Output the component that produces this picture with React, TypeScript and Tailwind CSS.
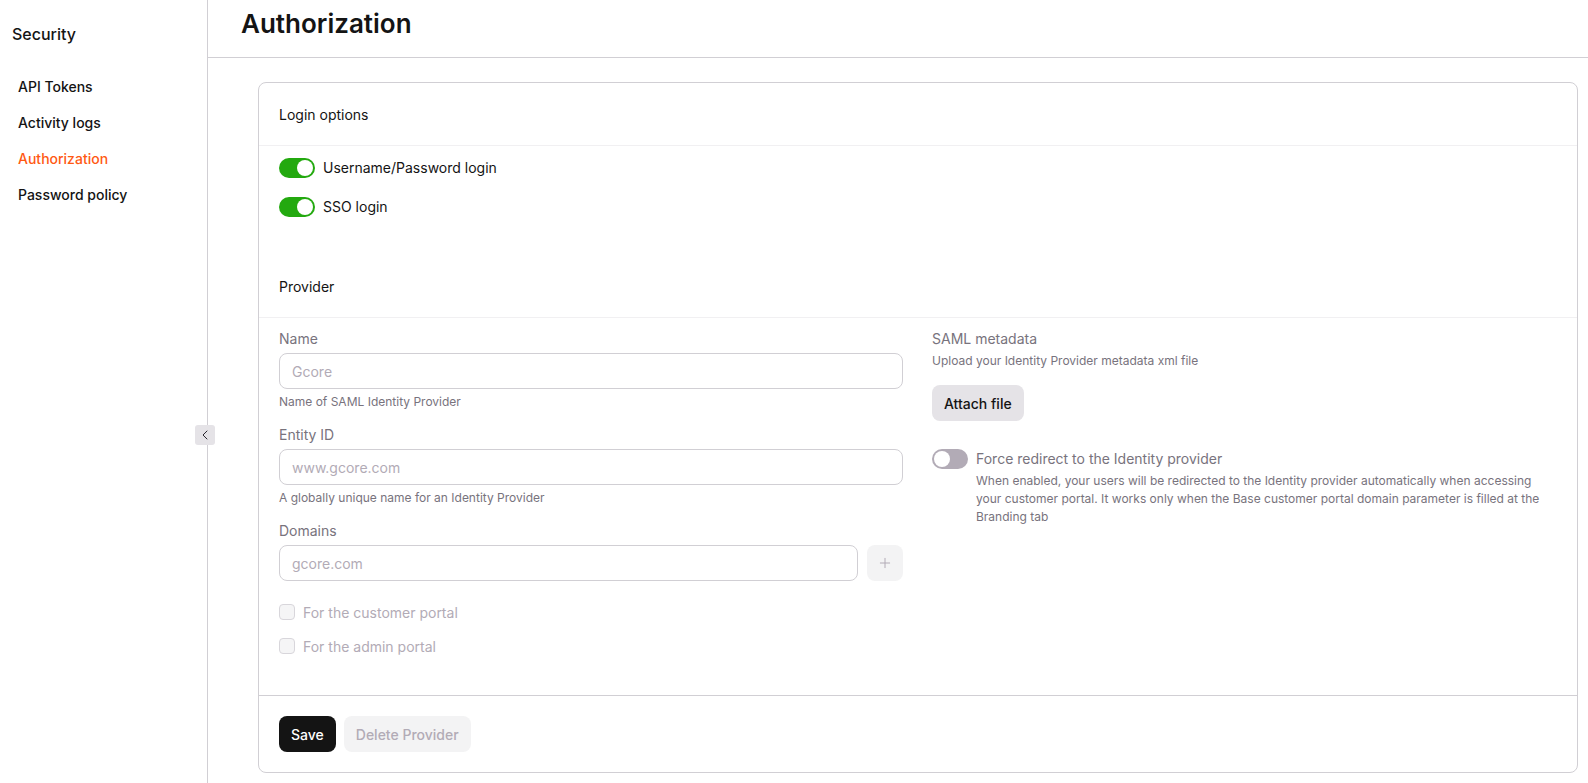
import { ChevronLeft, Plus } from 'lucide-react';

const navItems = ['API Tokens', 'Activity logs', 'Authorization', 'Password policy'];

function Toggle({ on = false }: { on?: boolean }) {
    return (
        <span className={`flex h-5 w-9 shrink-0 items-center rounded-full px-[2px] ${on ? 'justify-end bg-[#23a90f]' : 'justify-start bg-[#b2abb6]'}`}>
            <span className="h-4 w-4 rounded-full bg-white" />
        </span>
    );
}

function Field({ label, placeholder, hint }: { label: string; placeholder: string; hint?: string }) {
    return (
        <div className="flex flex-col">
            <label className="text-[14px] leading-[20px] text-[#78737d]">{label}</label>
            <input
                disabled
                placeholder={placeholder}
                className="mt-[4px] h-9 w-full rounded-[8px] border border-[#d1cfd4] bg-white px-3 text-[14px] placeholder:text-[#b2abb6]"
            />
            {hint && <p className="mt-[4px] text-[12px] leading-[18px] text-[#78737d]">{hint}</p>}
        </div>
    );
}

function Check({ label }: { label: string }) {
    return (
        <div className="flex h-4 items-center gap-2">
            <span className="h-4 w-4 rounded-[4px] border border-[#d8d6db] bg-[#f5f5f6]" />
            <span className="text-[14px] text-[#b2abb6]">{label}</span>
        </div>
    );
}

export default function App() {
    return (
        <div className="relative flex h-[783px] w-full overflow-hidden bg-white font-['Inter',sans-serif] text-[#141414]">
            <aside className="w-[208px] shrink-0 border-r border-[#d1cfd4]">
                <h2 className="mt-[23px] pl-3 text-[16px] leading-[22px] font-medium">Security</h2>
                <nav className="mt-[23px] flex flex-col pl-[18px]">
                    {navItems.map((item) => (
                        <a
                            key={item}
                            className={`flex h-9 items-center text-[14px] font-medium ${item === 'Authorization' ? 'text-[#ff5913]' : ''}`}
                        >
                            {item}
                        </a>
                    ))}
                </nav>
            </aside>
            <button className="absolute top-[425px] left-[195px] flex h-5 w-5 items-center justify-center rounded-[3px] bg-[#e5e3e7]">
                <ChevronLeft className="h-4 w-4 text-[#2b2830]" strokeWidth={1.5} />
            </button>

            <main className="flex min-w-0 flex-1 flex-col">
                <header className="flex h-[58px] shrink-0 items-start border-b border-[#d1cfd4] pl-[33px]">
                    <h1 className="mt-[6px] text-[26px] leading-[36px] font-semibold">Authorization</h1>
                </header>
                <div className="pt-[24px] pr-[10px] pl-[50px]">
                    <section className="flex h-[691px] flex-col rounded-[8px] border border-[#d1cfd4]">
                        <h3 className="flex h-[63px] shrink-0 items-center border-b border-[#f1f0f2] pl-5 text-[14px]">Login options</h3>
                        <div className="mt-[11px] flex flex-col gap-[18px] pl-5">
                            <div className="flex items-center gap-2 text-[14px]">
                                <Toggle on />
                                Username/Password login
                            </div>
                            <div className="flex items-center gap-2 text-[14px]">
                                <Toggle on />
                                SSO login
                            </div>
                        </div>
                        <h3 className="mt-[38px] flex h-[63px] shrink-0 items-center border-b border-[#f1f0f2] pl-5 text-[14px]">Provider</h3>

                        <div className="flex flex-1 gap-[29px] px-5 pt-[11px]">
                            <div className="flex w-[624px] shrink-0 flex-col gap-[14px]">
                                <Field label="Name" placeholder="Gcore" hint="Name of SAML Identity Provider" />
                                <Field label="Entity ID" placeholder="www.gcore.com" hint="A globally unique name for an Identity Provider" />
                                <div className="flex flex-col">
                                    <label className="text-[14px] leading-[20px] text-[#78737d]">Domains</label>
                                    <div className="mt-[4px] flex gap-[9px]">
                                        <input
                                            disabled
                                            placeholder="gcore.com"
                                            className="h-9 min-w-0 flex-1 rounded-[8px] border border-[#d1cfd4] bg-white px-3 text-[14px] placeholder:text-[#b2abb6]"
                                        />
                                        <button className="flex h-9 w-9 shrink-0 items-center justify-center rounded-[8px] bg-[#f3f3f4]">
                                            <Plus className="h-4 w-4 text-[#b2abb6]" strokeWidth={1.5} />
                                        </button>
                                    </div>
                                </div>
                                <div className="mt-[9px] flex flex-col gap-[18px]">
                                    <Check label="For the customer portal" />
                                    <Check label="For the admin portal" />
                                </div>
                            </div>
                            <div className="min-w-0 flex-1">
                                <div className="text-[14px] leading-[20px] text-[#78737d]">SAML metadata</div>
                                <p className="mt-[3px] text-[12px] leading-[18px] text-[#78737d]">Upload your Identity Provider metadata xml file</p>
                                <button className="mt-[15px] h-9 rounded-[8px] bg-[#e5e3e7] px-3 text-[14px] font-medium">Attach file</button>
                                <div className="mt-[28px] flex gap-2">
                                    <Toggle />
                                    <div>
                                        <div className="text-[14px] leading-[20px] text-[#78737d]">Force redirect to the Identity provider</div>
                                        <p className="mt-[3px] text-[12px] leading-[18px] text-[#78737d]">
                                            When enabled, your users will be redirected to the Identity provider automatically when accessing your customer portal. It works only when the Base customer portal domain parameter is filled at the Branding tab
                                        </p>
                                    </div>
                                </div>
                            </div>
                        </div>

                        <footer className="flex h-[77px] shrink-0 items-start gap-2 border-t border-[#d1cfd4] px-5 pt-[20px]">
                            <button className="h-9 rounded-[8px] bg-[#141414] px-3 text-[14px] font-medium text-white">Save</button>
                            <button className="h-9 rounded-[8px] bg-[#f3f3f4] px-3 text-[14px] font-medium text-[#b2abb6]">Delete Provider</button>
                        </footer>
                    </section>
                </div>
            </main>
        </div>
    );
}
